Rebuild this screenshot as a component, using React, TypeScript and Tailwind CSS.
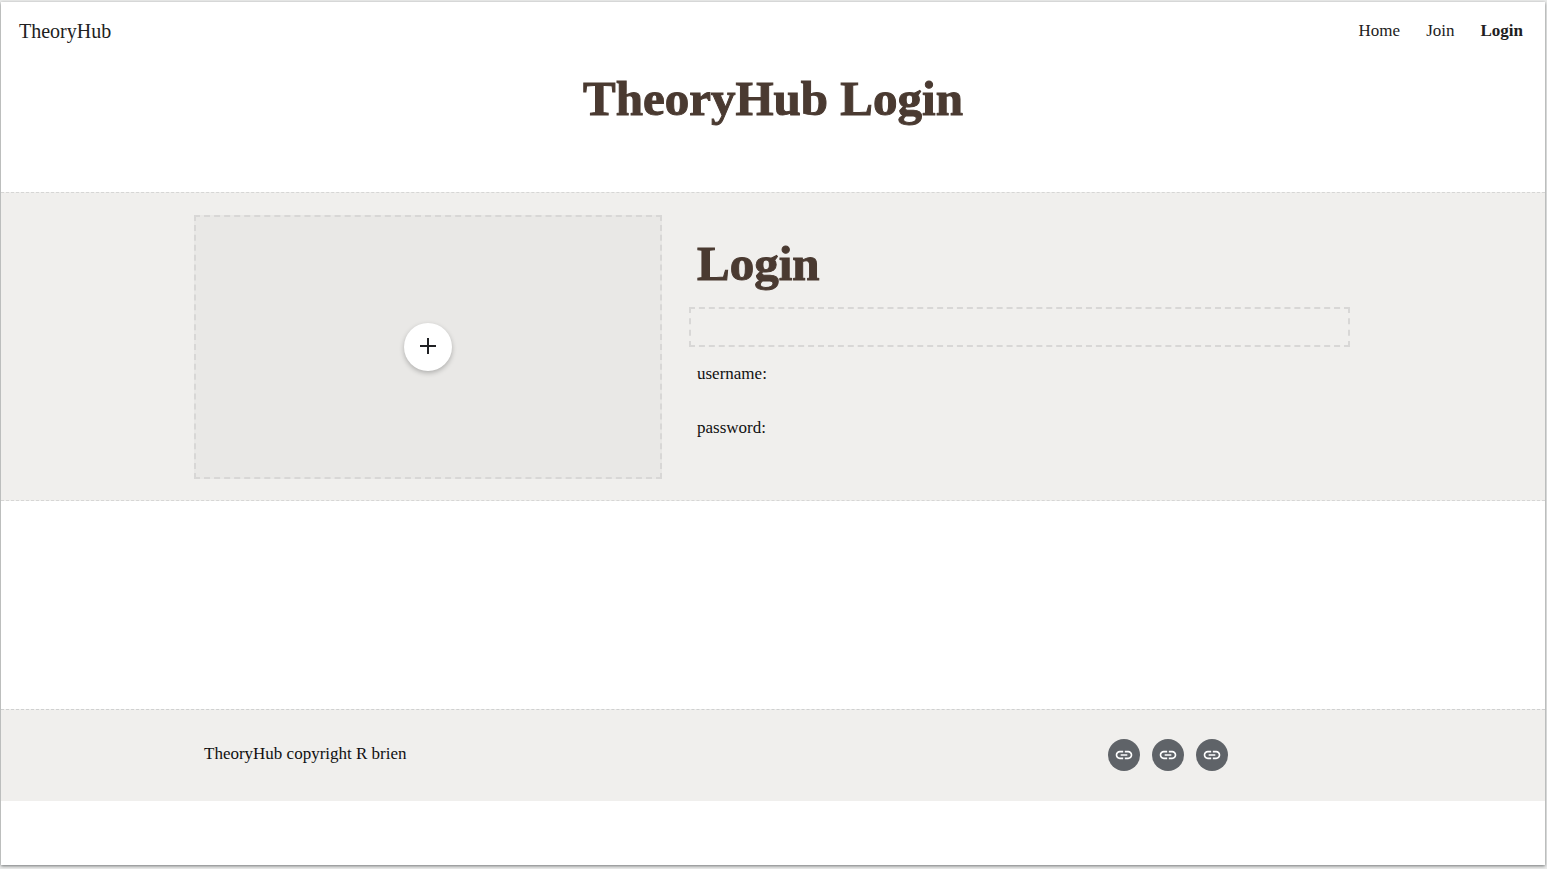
import React from "react";

const links = ["First link", "Second link", "Third link"];

function LinkIcon() {
  return (
    <svg viewBox="0 0 24 24" className="size-5 fill-white" aria-hidden="true">
      <path d="M17 7h-4v2h4c1.650 0 3 1.350 3 3s-1.350 3-3 3h-4v2h4c2.760 0 5-2.240 5-5s-2.240-5-5-5zM11 15H7c-1.650 0-3-1.350-3-3s1.350-3 3-3h4V7H7c-2.760 0-5 2.240-5 5s2.240 5 5 5h4v-2zM8 11h8v2H8v-2z" />
    </svg>
  );
}

export default function App() {
  return (
    <div className="min-h-screen bg-[#ebeceb] px-px pt-0.5 pb-1 pr-0.5 font-['Liberation_Serif',serif] text-[#212121]">
      <div className="flex min-h-[calc(100vh-6px)] flex-col bg-white shadow-[0_1px_3px_rgba(60,64,67,0.7)]">
        <header className="flex h-[58px] items-center justify-between pr-[22px] pl-[18px]">
          <a href="#home" className="text-xl">TheoryHub</a>
          <nav className="flex gap-[26px] text-[17px]">
            <a href="#home">Home</a>
            <a href="#join">Join</a>
            <a href="#login" className="font-bold" aria-current="page">Login</a>
          </nav>
        </header>

        <h1 className="h-[132px] pt-[7px] text-center text-[49px] leading-[64px] font-bold text-[#4a3a31] [-webkit-text-stroke:1px_#4a3a31]">
          TheoryHub Login
        </h1>

        <main className="border-y border-dashed border-[#d6d6d5] bg-[#f0efed]">
          <div className="mx-auto grid w-3/4 grid-cols-[468fr_661fr] gap-[27px] pt-[22px] pr-0.5 pb-[21px]">
            <div className="flex h-[264px] items-center justify-center border-2 border-dashed border-[#d8d7d6] bg-[#e9e8e6]">
              <button
                type="button"
                aria-label="Add image"
                className="flex size-12 items-center justify-center rounded-full bg-white shadow-[0_2px_5px_rgba(0,0,0,0.25)]"
              >
                <svg viewBox="0 0 24 24" className="size-6" aria-hidden="true">
                  <path d="M4 10h7V3h2v7h7v2h-7v7h-2v-7H4z" fill="#202124" />
                </svg>
              </button>
            </div>
            <section>
              <h2 className="px-2 pt-[17px] pb-[11px] text-[49px] leading-[64px] font-bold text-[#4a3a31] [-webkit-text-stroke:1px_#4a3a31]">
                Login
              </h2>
              <div className="h-10 border-2 border-dashed border-[#d8d7d6]" />
              <p className="px-2 pt-[15px] text-[17px] leading-6 text-[#111111]">username:</p>
              <p className="px-2 pt-[30px] text-[17px] leading-6 text-[#111111]">password:</p>
            </section>
          </div>
        </main>

        <footer className="mt-[208px] border-t border-dashed border-[#cfd0d0] bg-[#f0efed]">
          <div className="mx-auto flex h-[91px] w-3/4 items-center justify-between pr-[124px] pb-0.5 pl-[10px]">
            <p className="pb-0.5 text-[17px] leading-6 text-[#111111]">TheoryHub copyright R brien</p>
            <div className="flex gap-3">
              {links.map((label) => (
                <a
                  key={label}
                  href="#links"
                  aria-label={label}
                  className="flex size-8 items-center justify-center rounded-full bg-[#5f6368]"
                >
                  <LinkIcon />
                </a>
              ))}
            </div>
          </div>
        </footer>
      </div>
    </div>
  );
}
